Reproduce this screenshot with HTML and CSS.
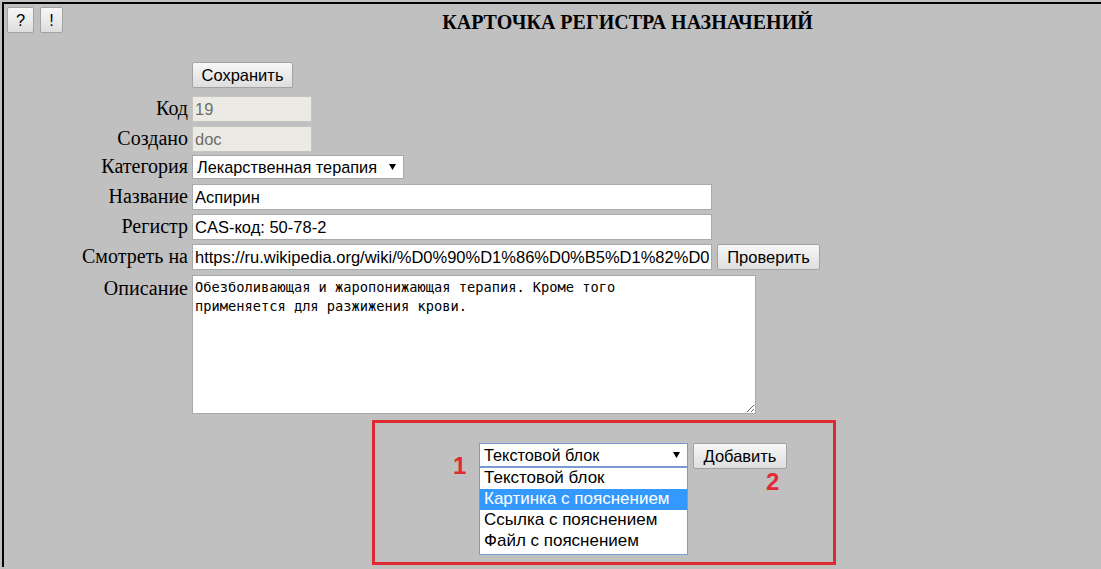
FILE: index.html
```html
<!DOCTYPE html>
<html lang="ru">
<head>
<meta charset="utf-8">
<title>Карточка регистра назначений</title>
<link rel="stylesheet" href="styles.css">
</head>
<body>
<div class="frame">
  <header class="top">
    <div class="tools">
      <button class="btn sq" type="button">?</button>
      <button class="btn sq" type="button">!</button>
    </div>
    <h1 class="title">КАРТОЧКА РЕГИСТРА НАЗНАЧЕНИЙ</h1>
  </header>

  <form class="card">
    <div class="row row-save"><span class="lbl"></span><button class="btn btn-save" type="button">Сохранить</button></div>
    <div class="row"><label class="lbl">Код</label><input class="inp inp-short" disabled value="19"></div>
    <div class="row"><label class="lbl">Создано</label><input class="inp inp-short" disabled value="doc"></div>
    <div class="row row-sel"><label class="lbl">Категория</label>
      <select class="sel sel-cat"><option>Лекарственная терапия</option></select>
    </div>
    <div class="row"><label class="lbl">Название</label><input class="inp inp-long" value="Аспирин"></div>
    <div class="row"><label class="lbl">Регистр</label><input class="inp inp-long" value="CAS-код: 50-78-2"></div>
    <div class="row"><label class="lbl">Смотреть на</label><input class="inp inp-long" value="https://ru.wikipedia.org/wiki/%D0%90%D1%86%D0%B5%D1%82%D0%B8%D0%BB"><button class="btn btn-check" type="button">Проверить</button></div>
    <div class="row row-area"><label class="lbl lbl-area">Описание</label>
      <textarea class="area">Обезболивающая и жаропонижающая терапия. Кроме того
применяется для разжижения крови.</textarea>
    </div>
  </form>

  <section class="add">
    <div class="annot-box"></div>
    <span class="mark mark-1">1</span>
    <span class="mark mark-2">2</span>
    <div class="picker">
      <select class="sel sel-add"><option>Текстовой блок</option></select>
      <ul class="dropdown">
        <li class="opt">Текстовой блок</li>
        <li class="opt opt-active">Картинка с пояснением</li>
        <li class="opt">Ссылка с пояснением</li>
        <li class="opt">Файл с пояснением</li>
      </ul>
    </div>
    <button class="btn btn-add" type="button">Добавить</button>
  </section>
</div>
</body>
</html>
```

FILE: styles.css
```css
html, body {
  margin: 0;
  padding: 0;
  background: #c0c0c0;
}

.frame {
  margin: 2px 0 0 2px;
  border-top: 2px solid #000;
  border-left: 2px solid #000;
  min-height: calc(100vh - 4px);
  box-sizing: border-box;
  font-family: "Liberation Serif", "Times New Roman", serif;
}

.top {
  display: flex;
  align-items: flex-start;
  padding: 3px 0 0 3px;
}

.tools {
  display: flex;
  gap: 6px;
}

.title {
  flex: 1;
  margin: 4px 0 0 0;
  padding-left: 91px;
  text-align: center;
  font: bold 20px/22px "Liberation Serif", "Times New Roman", serif;
  color: #000;
}

.btn {
  font: 16.5px "Liberation Sans", Arial, sans-serif;
  color: #000;
  height: 26px;
  padding: 0 8px;
  border: 1px solid #a3a3a3;
  border-radius: 2px;
  background: linear-gradient(#f7f7f7, #dedede);
  box-sizing: border-box;
  margin: 0;
}

.sq {
  width: 27px;
  padding: 0;
}
.sq + .sq {
  width: 23px;
}

.card {
  display: flex;
  flex-direction: column;
  gap: 4px;
  margin: 29px 0 0 0;
}

.row {
  display: flex;
  align-items: baseline;
}

.row-save {
  margin-bottom: 4px;
}
.btn-save {
  width: 101px;
}

.lbl {
  flex: none;
  width: 184px;
  margin-right: 4px;
  text-align: right;
  font: 20px "Liberation Serif", "Times New Roman", serif;
  color: #000;
}

.inp {
  box-sizing: border-box;
  height: 26px;
  margin: 0;
  padding: 0 2px;
  border: 1px solid #a9a9a9;
  background: #fff;
  color: #000;
  font: 16.5px "Liberation Sans", Arial, sans-serif;
}
.inp:disabled {
  background: #ebebe4;
  color: #6d6d6d;
  border-color: #c4c4c0;
}
.inp-short {
  width: 120px;
}
.inp-long {
  width: 520px;
}

.btn-check {
  margin-left: 5px;
  width: 103px;
}

.sel {
  -webkit-appearance: none;
  appearance: none;
  box-sizing: border-box;
  height: 24px;
  margin: 0;
  padding: 0 20px 0 4px;
  border: 1px solid #a9a9a9;
  border-radius: 0;
  color: #000;
  font: 16.3px "Liberation Sans", Arial, sans-serif;
  background: #fff url("data:image/svg+xml;utf8,<svg xmlns='http://www.w3.org/2000/svg' width='7' height='6'><path d='M0 0H7L3.5 6Z' fill='%23000'/></svg>") no-repeat right 7px center;
}

.row-sel {
  margin-top: -1px;
  margin-bottom: 1px;
}
.sel-cat {
  width: 212px;
}

.row-area {
  align-items: flex-start;
  margin-top: 1px;
}
.lbl-area {
  padding-top: 2px;
  line-height: 22px;
}
.area {
  box-sizing: border-box;
  width: 564px;
  height: 139px;
  margin: 0;
  padding: 2px 2px;
  border: 1px solid #a9a9a9;
  background: #fff;
  color: #000;
  font: 13.7px/19px "DejaVu Sans Mono", "Liberation Mono", monospace;
  resize: both;
}

.add {
  position: relative;
  display: flex;
  align-items: flex-start;
  margin-top: 29px;
  padding-left: 475px;
}

.annot-box {
  position: absolute;
  left: 368px;
  top: -23px;
  width: 464px;
  height: 145px;
  box-sizing: border-box;
  border: 3px solid #e02a33;
}

.mark {
  position: absolute;
  font: bold 24px/24px "Liberation Sans", Arial, sans-serif;
  color: #e02a33;
}
.mark-1 {
  left: 449px;
  top: 11px;
}
.mark-2 {
  left: 762px;
  top: 27px;
}

.picker {
  position: relative;
}
.sel-add {
  width: 209px;
  border-color: #7a9bcf;
}

.dropdown {
  position: absolute;
  left: 0;
  top: 24px;
  width: 209px;
  box-sizing: border-box;
  margin: 0;
  padding: 0 0 2px;
  list-style: none;
  background: #fff;
  border: 1px solid #7a9bcf;
}
.opt {
  height: 21px;
  padding-left: 4px;
  font: 17px/20px "Liberation Sans", Arial, sans-serif;
  color: #000;
  white-space: nowrap;
}
.opt-active {
  background: #3399ff;
  color: #fff;
}

.btn-add {
  margin-left: 5px;
  width: 94px;
}
```
